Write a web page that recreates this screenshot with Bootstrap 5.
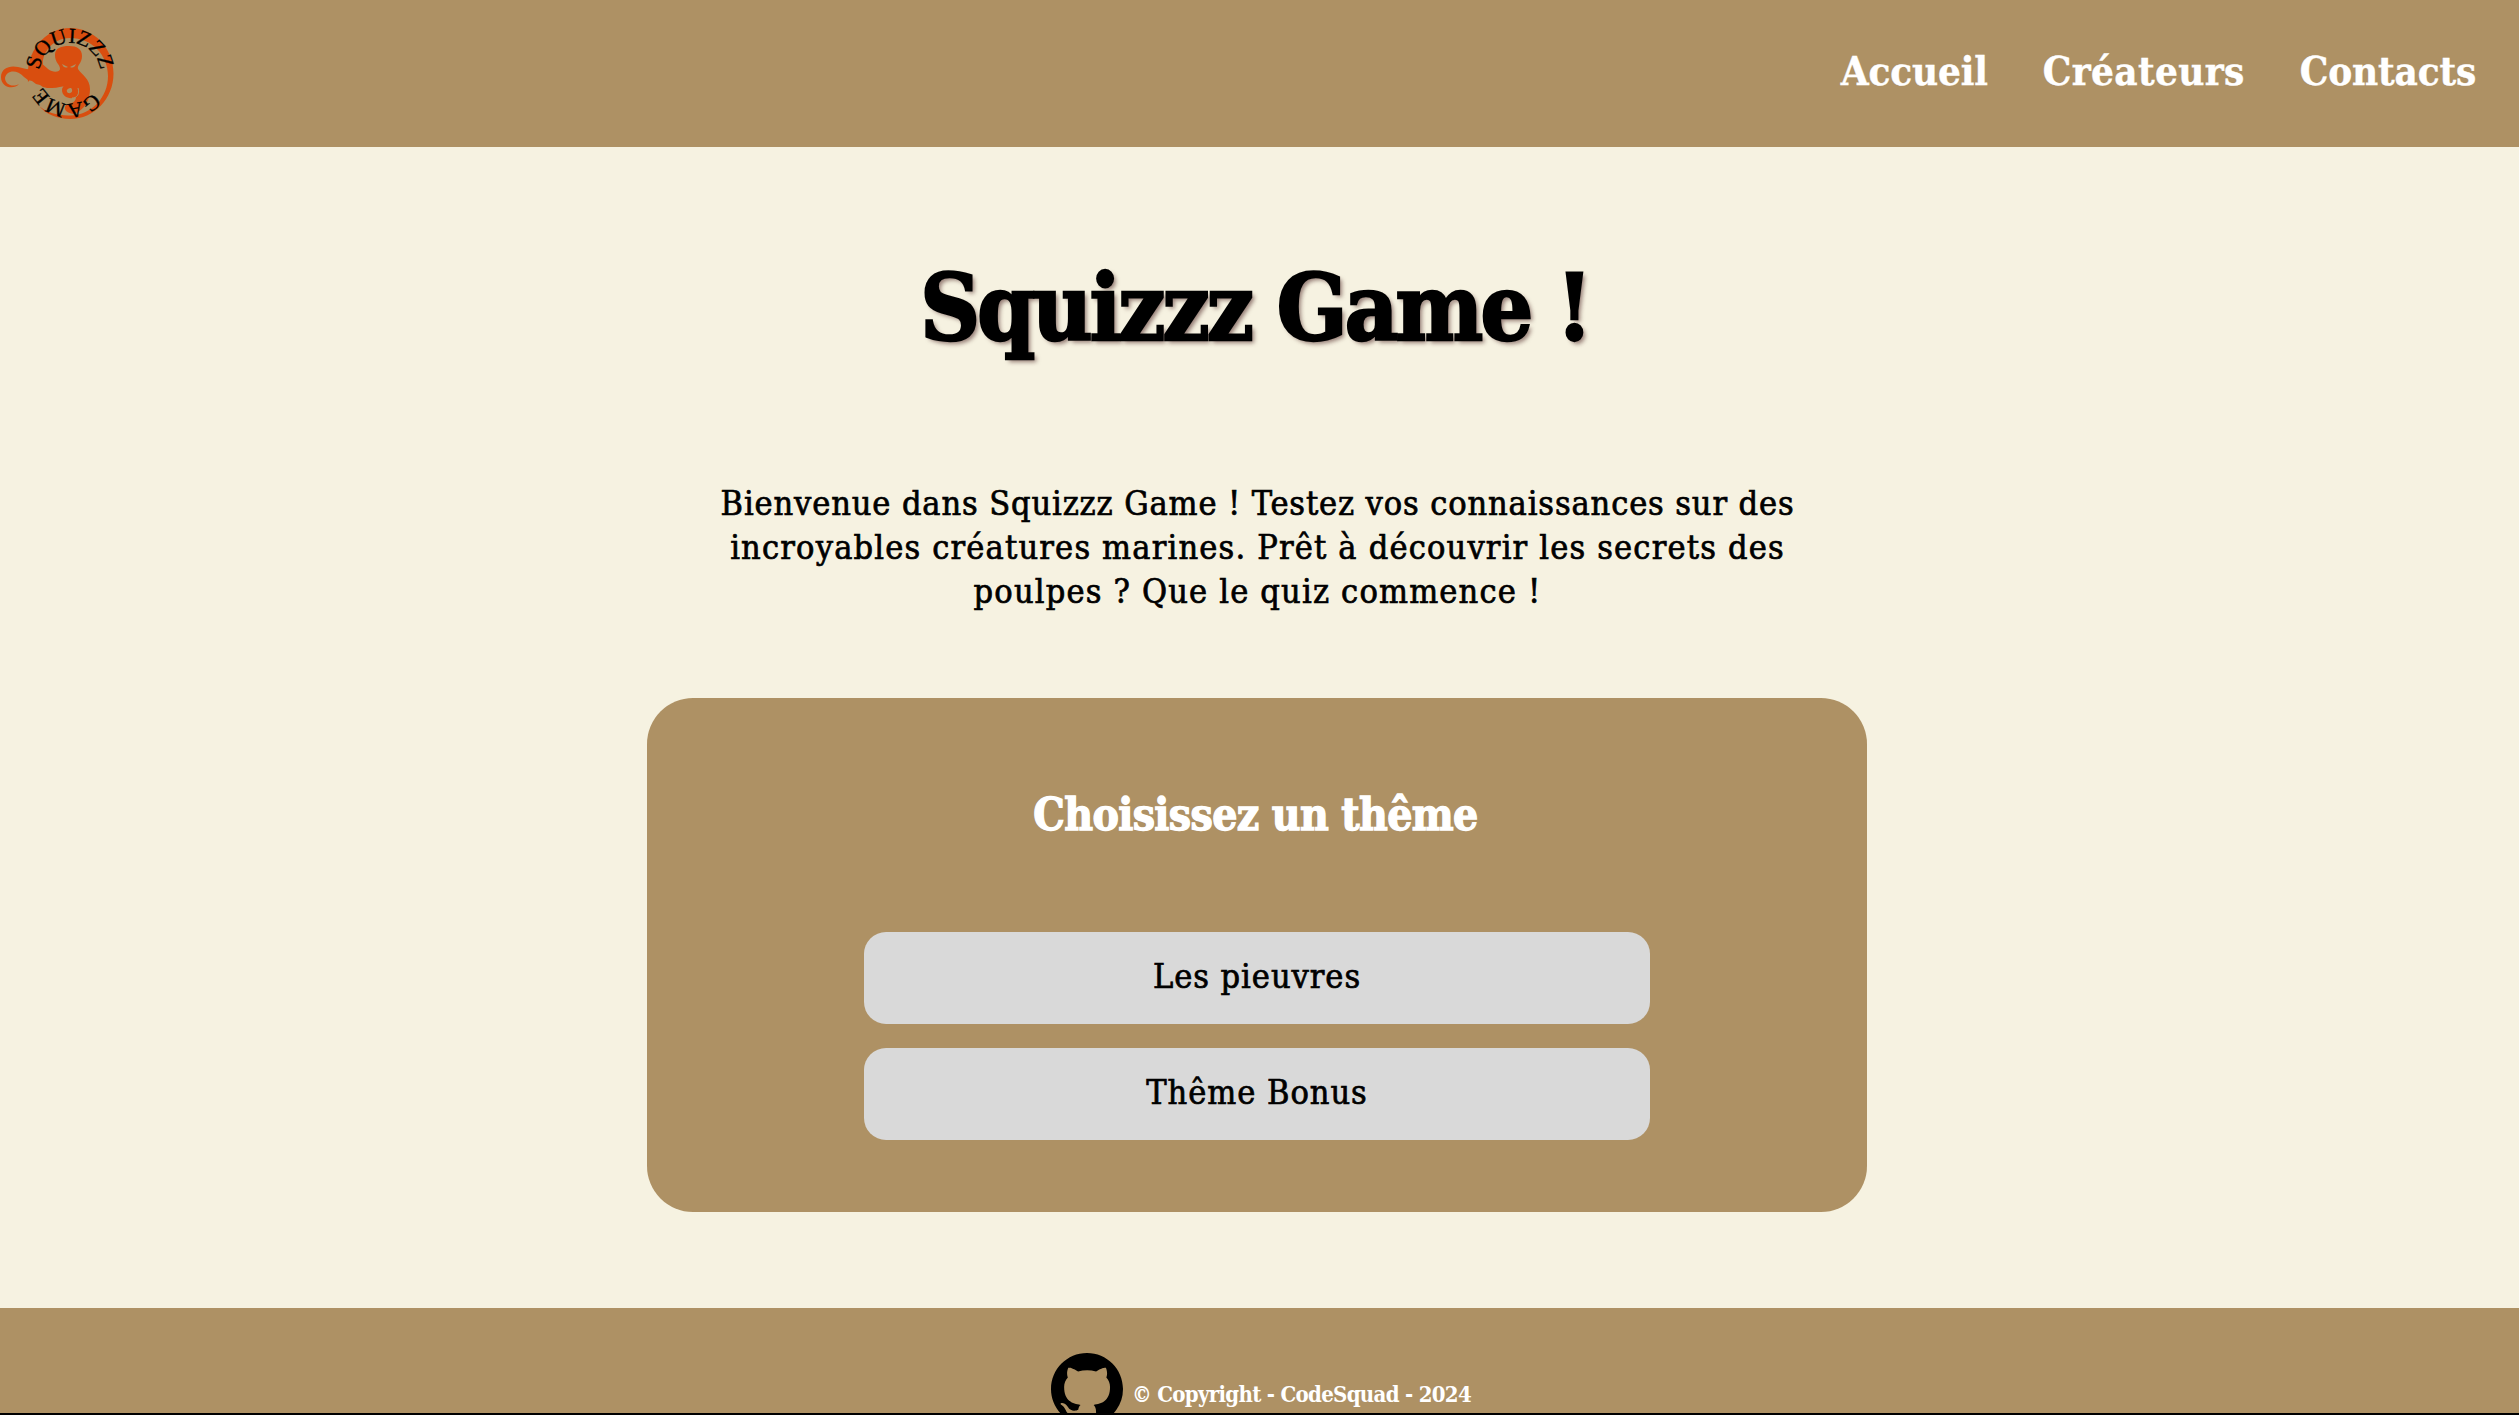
<!DOCTYPE html>
<html lang="fr">
<head>
<meta charset="utf-8">
<meta name="viewport" content="width=device-width, initial-scale=1">
<title>Squizzz Game</title>
<link href="https://cdn.jsdelivr.net/npm/bootstrap@5.3.0/dist/css/bootstrap.min.css" rel="stylesheet">
<style>
  :root { --sand: #ae9164; --cream: #f6f2e1; }
  html, body { height: 100%; }
  body {
    background: var(--cream); color: #000; overflow: hidden;
    font-family: "DejaVu Serif Condensed", "DejaVu Serif", serif;
    border-bottom: 2px solid #000;
  }
  .site-header { background: var(--sand); height: 147px; flex: none; }
  .site-logo { width: 115px; height: 147px; display: block; }
  .site-menu { gap: 55px; padding-right: 43px; margin-top: -5px; }
  .site-menu .nav-link { color: #fff; font-weight: 700; font-size: 40px; line-height: 60px; padding: 0; letter-spacing: -.15px; -webkit-text-stroke: .4px #fff; }
  .site-menu .nav-wide { letter-spacing: .35px; }
  .game-title { font-size: 92px; font-weight: 700; line-height: 110px; letter-spacing: -2.8px; margin: 106px 9px 0 0; text-shadow: 3px 3px 4px rgba(70,30,30,.55); -webkit-text-stroke: 2.5px #000; }
  .intro-text { font-size: 34px; line-height: 44.2px; letter-spacing: 1.17px; margin: 118px 4px 0 0; -webkit-text-stroke: .7px #000; }
  .intro-text span { display: block; }
  .intro-first { letter-spacing: .87px; }
  .theme-panel { background: var(--sand); width: 1220px; height: 514px; border-radius: 46px; margin: 84px 5px 0 0; padding-top: 87px; }
  .theme-title { color: #fff; font-size: 44px; font-weight: 700; line-height: 60px; letter-spacing: -.6px; margin: 0 3px 87px 0; -webkit-text-stroke: 1.3px #fff; }
  .theme-choice { background: #d9d9d9; color: #000; width: 786px; height: 92px; border: 0; border-radius: 22px; font-size: 34px; letter-spacing: .95px; padding: 0 0 2px; -webkit-text-stroke: .7px #000; }
  .theme-choice:hover { background: #cfcfcf; color: #000; }
  .site-footer { background: var(--sand); height: 105px; overflow: hidden; padding: 45px 0 0 3px; gap: 9px; color: #fff; font-size: 22px; font-weight: 700; }
  .site-footer p { line-height: 30px; margin: 26px 0 0; white-space: nowrap; letter-spacing: -.7px; }
</style>
</head>
<body class="d-flex flex-column">
<header class="site-header navbar p-0 d-flex flex-nowrap justify-content-between align-items-center">
  <a class="navbar-brand p-0 m-0" href="#">
    <svg class="site-logo" viewBox="0 0 115 147" role="img" aria-label="Squizzz Game">
      <defs>
        <path id="ringTop" d="M39.5 73.5a30.500 30.500 0 1 1 61 0a30.500 30.500 0 1 1-61 0"/>
        <path id="ringLow" d="M69.5 44.500a29.500 29.500 0 1 1 0 59a29.500 29.500 0 1 1 0-59"/>
      </defs>
      <g fill="#d94e0f">
        <path fill-rule="evenodd" d="M28 82C25 51 45 28 70.500 28C94 28 113.500 48 113.500 73.500S94 119 70.500 119C57 119 46 114 39 106C46 112 58 116 70.500 115.500C92 115 108 97 108 76C108 55 92 38 70 38C52 38 42 54 43 64Z"/>
        <path d="M28 62C36 56 44 66 48 69C53 73 60 72 60 69C60 64 55 63 55 55C55 48 61 46 69 46C77 46 82 49 82 56C82 63 77 65 78 69C82 75 90 79 90 89C90 101 84 110 74 114C66 113 63 109 66 105C71 104 76 102 76 97C70 100 62 97 62 90C62 85 68 84 72 88C68 88 65 90 68 93C72 94 74 90 70 87C64 85 60 88 52 88L47 88L43 87L40 85L36 84L32 81L28 80L24 77C16 68 6 71 5 78C5 84 12 88 19 84C14 90 1 88 1 77C1 68 10 65 18 67C24 68 27 70 31 69Z"/>
      </g>
      <path d="M62 64l6 3q-4 2-6-3M76 64l-6 3q4 2 6-3" fill="#ae9164"/>
      <path d="M78 88C80 94 77 98 72 98" fill="none" stroke="#ae9164" stroke-width="1"/>
      <g font-family="Liberation Serif, serif" font-size="21.500" fill="#000" stroke="#000" stroke-width=".3" text-anchor="middle">
        <text letter-spacing="-.1"><textPath href="#ringTop" startOffset="25%">SQUIZZZ</textPath></text>
        <text letter-spacing="-1"><textPath href="#ringLow" startOffset="51.500%">GAME</textPath></text>
      </g>
    </svg>
  </a>
  <nav class="nav site-menu flex-nowrap">
    <a class="nav-link" href="#">Accueil</a>
    <a class="nav-link nav-wide" href="#">Créateurs</a>
    <a class="nav-link" href="#">Contacts</a>
  </nav>
</header>

<main class="flex-grow-1 d-flex flex-column align-items-center text-center">
  <h1 class="game-title">Squizzz Game !</h1>
  <p class="intro-text">
    <span class="intro-first">Bienvenue dans Squizzz Game ! Testez vos connaissances sur des</span>
    <span>incroyables créatures marines. Prêt à découvrir les secrets des</span>
    <span>poulpes ? Que le quiz commence !</span>
  </p>
  <section class="theme-panel d-flex flex-column align-items-center">
    <h2 class="theme-title">Choisissez un thême</h2>
    <div class="d-flex flex-column gap-4">
      <button class="btn theme-choice" type="button">Les pieuvres</button>
      <button class="btn theme-choice" type="button">Thême Bonus</button>
    </div>
  </section>
</main>

<footer class="site-footer d-flex justify-content-center align-items-start flex-shrink-0">
  <svg width="72" height="72" viewBox="0 0 16 16" class="flex-shrink-0" aria-label="GitHub"><path d="M8 0C3.580 0 0 3.580 0 8c0 3.540 2.290 6.530 5.470 7.590.4.070.55-.17.55-.38 0-.19-.01-.82-.01-1.490-2.010.37-2.530-.49-2.690-.94-.09-.23-.48-.94-.82-1.130-.28-.15-.68-.52-.01-.53.63-.01 1.080.58 1.230.82.72 1.210 1.870.87 2.330.66.07-.52.28-.87.51-1.070-1.780-.2-3.640-.89-3.640-3.950 0-.87.31-1.590.82-2.150-.08-.2-.36-1.020.08-2.120 0 0 .67-.21 2.200.82.64-.18 1.320-.27 2-.27s1.360.09 2 .27c1.530-1.040 2.200-.82 2.200-.82.44 1.100.16 1.920.08 2.120.51.56.82 1.270.82 2.150 0 3.070-1.870 3.750-3.650 3.950.29.25.54.73.54 1.480 0 1.070-.01 1.930-.01 2.200 0 .21.15.46.55.38A8.010 8.010 0 0 0 16 8c0-4.420-3.580-8-8-8"/></svg>
  <p>© Copyright - CodeSquad - 2024</p>
</footer>
<script src="https://cdn.jsdelivr.net/npm/bootstrap@5.3.0/dist/js/bootstrap.bundle.min.js"></script>
</body>
</html>
